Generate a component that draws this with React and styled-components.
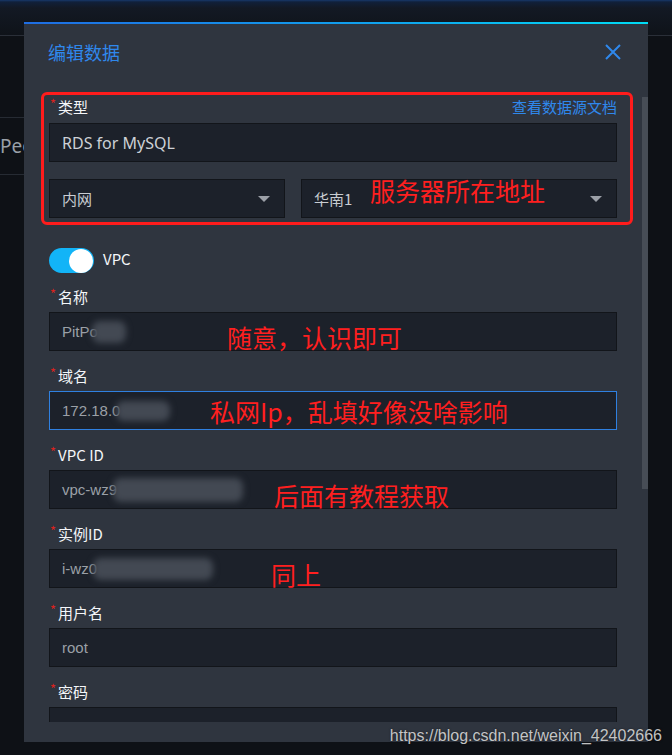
import React from 'react';
import styled, { createGlobalStyle } from 'styled-components';

const GlobalStyle = createGlobalStyle`
  html, body { margin: 0; padding: 0; background: #0e1116; }
  body { font-family: "Noto Sans", "Noto Sans CJK SC", sans-serif; overflow: hidden; }
  * { box-sizing: border-box; }
`;

const Page = styled.div`
  position: relative;
  width: 672px;
  height: 755px;
  overflow: hidden;
  background: #0e1116;
`;

const TopNav = styled.div`
  height: 36px;
  background: linear-gradient(180deg, #17386a 0px, #10203a 2px, #131924 8px, #0f1319 35px);
  border-bottom: 1px solid #2a2f38;
`;

const BgTable = styled.div`
  width: 320px;
  margin-top: 81px;
  border-top: 1px solid #262b33;
`;

const BgRow = styled.div`
  height: 57px;
  border-bottom: 1px solid #262b33;
  display: flex;
  align-items: center;
  color: #9aa0a8;
  font-size: 19px;
  font-family: "Noto Sans", sans-serif;
`;

const Modal = styled.div`
  position: absolute;
  left: 24px;
  top: 22px;
  width: 624px;
  height: 720px;
  background: #2f353f;
  display: flex;
  flex-direction: column;
`;

const AccentBar = styled.div`
  flex: none;
  height: 2px;
  background: linear-gradient(90deg, #1f6de3 0%, #0fa6ee 60%, #00dcf5 100%);
`;

const Header = styled.div`
  flex: none;
  height: 64px;
  padding: 16px 27px 0 24px;
  display: flex;
  justify-content: space-between;
  align-items: flex-start;
`;

const Title = styled.div`
  font-family: "Noto Sans CJK SC", sans-serif;
  font-size: 18px;
  line-height: 24px;
  color: #2f88ec;
`;

const CloseButton = styled.div`
  margin-top: 4px;
  width: 16px;
  height: 16px;
  display: flex;
`;

const Body = styled.div`
  position: relative;
  flex: none;
  height: 634px;
  overflow: hidden;
  padding: 8px 31px 0 25px;
`;

const ScrollThumb = styled.div`
  position: absolute;
  right: 0;
  top: 75px;
  width: 6px;
  height: 392px;
  background: #474d56;
`;

const TypeSection = styled.div`
  position: relative;
`;

const RedBox = styled.div`
  position: absolute;
  left: -8px;
  top: -4px;
  right: -16px;
  bottom: -7px;
  border: 3px solid #ff1c1c;
  border-radius: 6px;
  pointer-events: none;
`;

const LabelRow = styled.div`
  height: 22px;
  display: flex;
  justify-content: space-between;
  align-items: center;
`;

const Label = styled.div`
  font-family: "Noto Sans CJK SC", sans-serif;
  font-size: 15px;
  line-height: 22px;
  color: #f4f6f9;
  display: flex;
  align-items: flex-start;
`;

const Star = styled.span`
  color: #d8231f;
  font-size: 13px;
  line-height: 16px;
  margin: 0 2px 0 1px;
`;

const DocLink = styled.a`
  font-family: "Noto Sans CJK SC", sans-serif;
  font-size: 15px;
  line-height: 22px;
  color: #2f88ec;
  text-decoration: none;
`;

const InputBox = styled.div`
  position: relative;
  height: 39px;
  margin-top: ${p => p.$mt || 0}px;
  background: #1c212a;
  border: 1px solid ${p => (p.$focused ? '#2f80e0' : '#12151a')};
  padding: 0 14px 0 12px;
  display: flex;
  align-items: center;
  justify-content: space-between;
  color: ${p => (p.$muted ? '#9ba0a7' : '#cdd1d6')};
  font-family: ${p => (p.$mono ? '"Liberation Sans", Arial' : '"Noto Sans", "Noto Sans CJK SC"')}, sans-serif;
  font-size: ${p => (p.$mono ? 15 : 16)}px;
  white-space: nowrap;
`;

const SelectRow = styled.div`
  margin-top: 17px;
  display: grid;
  grid-template-columns: 236px 1fr;
  gap: 16px;
`;

const SelectText = styled.span`
  font-family: "Noto Sans CJK SC", sans-serif;
  font-size: 15px;
  color: #c9cdd2;
`;

const Caret = styled.span`
  width: 0;
  height: 0;
  border-left: 6px solid transparent;
  border-right: 6px solid transparent;
  border-top: 6px solid #9ba0a7;
`;

const ToggleRow = styled.div`
  margin-top: 30px;
  height: 25px;
  display: flex;
  align-items: center;
  gap: 9px;
`;

const ToggleTrack = styled.div`
  width: 45px;
  height: 25px;
  border-radius: 13px;
  background: #12b4f7;
  display: flex;
  align-items: center;
  justify-content: flex-end;
  padding: 0 1px;
`;

const ToggleKnob = styled.div`
  width: 24px;
  height: 24px;
  border-radius: 50%;
  background: #ffffff;
`;

const ToggleLabel = styled.span`
  font-family: "Noto Sans CJK SC", sans-serif;
  font-size: 15px;
  line-height: 22px;
  margin-top: -3px;
  color: #f4f6f9;
`;

const FieldList = styled.div`
  margin-top: 13px;
  display: flex;
  flex-direction: column;
  gap: 14px;
`;

const Field = styled.div`
  display: flex;
  flex-direction: column;
  gap: 4px;
`;

const Smudge = styled.span`
  display: inline-block;
  width: ${p => p.$w}px;
  height: ${p => p.$h}px;
  margin-left: ${p => p.$ml || 0}px;
  background: #434953;
  border-radius: 8px;
  filter: blur(3px);
  vertical-align: middle;
`;

const Note = styled.span`
  position: absolute;
  left: ${p => p.$x}px;
  top: ${p => p.$y}px;
  color: #ff1f1f;
  font-family: "Noto Sans CJK SC", sans-serif;
  font-size: 25px;
  line-height: 32px;
  white-space: nowrap;
  pointer-events: none;
`;

const Footer = styled.div`
  flex: none;
  height: 20px;
`;

const Watermark = styled.div`
  position: absolute;
  right: 10px;
  bottom: 10px;
  font-family: "Liberation Sans", Arial, sans-serif;
  font-size: 16px;
  line-height: 18px;
  color: rgba(235, 235, 235, 0.82);
  text-shadow: 0 0 2px rgba(0, 0, 0, 0.6);
`;

const Value = styled.span`
  display: inline-flex;
  align-items: center;
`;

const fields = [
  { label: '名称', value: 'PitPo', smudge: [34, 22, -6], note: '随意，认识即可', nx: 177, ny: 8 },
  { label: '域名', value: '172.18.0', smudge: [54, 20, -4], focused: true, note: '私网Ip，乱填好像没啥影响', nx: 160, ny: 3 },
  { label: 'VPC ID', value: 'vpc-wz9', smudge: [130, 24, -4], note: '后面有教程获取', nx: 224, ny: 8 },
  { label: '实例ID', value: 'i-wz0', smudge: [120, 22, -4], note: '同上', nx: 221, ny: 8 },
  { label: '用户名', value: 'root' },
  { label: '密码', value: '' },
];

function CloseIcon() {
  return (
    <svg width="16" height="16" viewBox="0 0 16 16">
      <path d="M1 1 L15 15 M15 1 L1 15" stroke="#2f88ec" strokeWidth="2" fill="none" />
    </svg>
  );
}

export default function App() {
  return (
    <Page>
      <GlobalStyle />
      <TopNav />
      <BgTable>
        <BgRow>People</BgRow>
      </BgTable>

      <Modal>
        <AccentBar />
        <Header>
          <Title>编辑数据</Title>
          <CloseButton>
            <CloseIcon />
          </CloseButton>
        </Header>
        <Body>
          <TypeSection>
            <LabelRow>
              <Label><Star>*</Star>类型</Label>
              <DocLink>查看数据源文档</DocLink>
            </LabelRow>
            <InputBox $mt={5}>RDS for MySQL</InputBox>
            <SelectRow>
              <InputBox>
                <SelectText>内网</SelectText>
                <Caret />
              </InputBox>
              <InputBox>
                <SelectText>华南1</SelectText>
                <Caret />
                <Note $x={68} $y={-6}>服务器所在地址</Note>
              </InputBox>
            </SelectRow>
            <RedBox />
          </TypeSection>

          <ToggleRow>
            <ToggleTrack>
              <ToggleKnob />
            </ToggleTrack>
            <ToggleLabel>VPC</ToggleLabel>
          </ToggleRow>

          <FieldList>
            {fields.map(f => (
              <Field key={f.label}>
                <Label><Star>*</Star>{f.label}</Label>
                <InputBox $muted $mono $focused={f.focused}>
                  <Value>
                    {f.value}
                    {f.smudge && <Smudge $w={f.smudge[0]} $h={f.smudge[1]} $ml={f.smudge[2]} />}
                  </Value>
                  {f.note && <Note $x={f.nx} $y={f.ny}>{f.note}</Note>}
                </InputBox>
              </Field>
            ))}
          </FieldList>
        </Body>
        <Footer />
        <ScrollThumb />
      </Modal>

      <Watermark>https://blog.csdn.net/weixin_42402666</Watermark>
    </Page>
  );
}
